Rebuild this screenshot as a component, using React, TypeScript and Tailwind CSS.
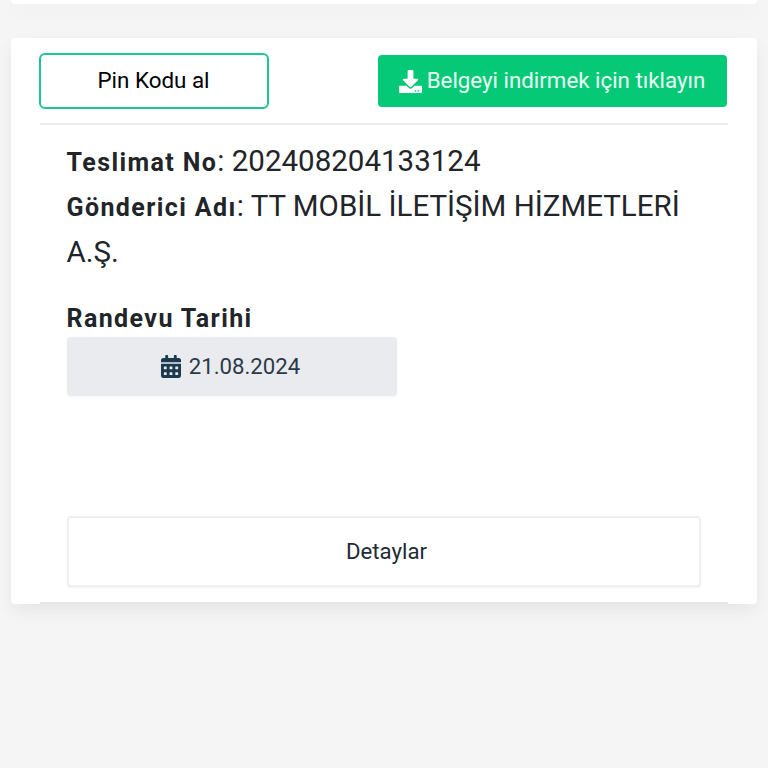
import { FaCalendarAlt, FaDownload } from "react-icons/fa";

export default function App() {
  return (
    <div className="h-[768px] w-[768px] overflow-hidden bg-[#f5f5f5] font-['Roboto',sans-serif] text-[#212529]">
      <div className="mx-[11px] h-[4px] rounded-b-[4px] bg-white shadow-[0_8px_16px_rgba(0,0,0,0.05)]" />
      <div className="mx-[11px] mt-[34px] h-[566px] rounded-[4px] bg-white shadow-[0_8px_16px_rgba(0,0,0,0.06)]">
        <div className="mx-[29px] flex h-[87px] items-center justify-between border-b-2 border-[#eceeef] pt-[1px]">
          <button className="ml-[-1px] h-[56px] w-[230px] rounded-[6px] border-2 border-[#1dc88c] bg-white pr-[1px] text-[22.4px] text-black">
            Pin Kodu al
          </button>
          <button className="mr-[1px] flex h-[52px] w-[349px] items-center justify-center gap-[5px] rounded-[4px] bg-[#06c977] pr-[1px] text-[22.3px] text-[#eafff5]">
            <FaDownload className="h-[23px] w-[23px] text-white" />
            Belgeyi indirmek için tıklayın
          </button>
        </div>
        <div className="pl-[55.5px] pr-[56px] pt-[15px]">
          <p className="text-[29.5px] leading-[43px]">
            <b className="text-[25px] font-bold leading-none tracking-[1.4px]">Teslimat No</b>: 202408204133124
          </p>
          <p className="text-[29.5px] leading-[46px]">
            <b className="text-[25px] font-bold leading-none tracking-[1.4px]">Gönderici Adı</b>: TT MOBİL İLETİŞİM HİZMETLERİ A.Ş.
          </p>
          <p className="mt-[26px] text-[25px] font-bold leading-[36px] tracking-[1.4px]">Randevu Tarihi</p>
          <div className="ml-[0.5px] flex h-[59px] w-[330px] items-center justify-center gap-[8px] rounded-[4px] bg-[#e9ebef] pr-[3px] text-[22.2px] text-[#2b3a4a] shadow-[0_1px_3px_rgba(0,0,0,0.04)]">
            <FaCalendarAlt className="h-[23px] w-[20px] text-[#1c3a4f]" />
            21.08.2024
          </div>
        </div>
        <div className="mx-[56px] mt-[120px] flex h-[71px] items-center justify-center rounded-[4px] border-2 border-[#f0f0f0] bg-white pl-[5px] text-[22.2px] text-[#212b36] shadow-[0_1px_2px_rgba(0,0,0,0.05)]">
          Detaylar
        </div>
        <div className="mx-[29px] mt-[15px] h-[2px] bg-[#e6e6e6]" />
      </div>
    </div>
  );
}
